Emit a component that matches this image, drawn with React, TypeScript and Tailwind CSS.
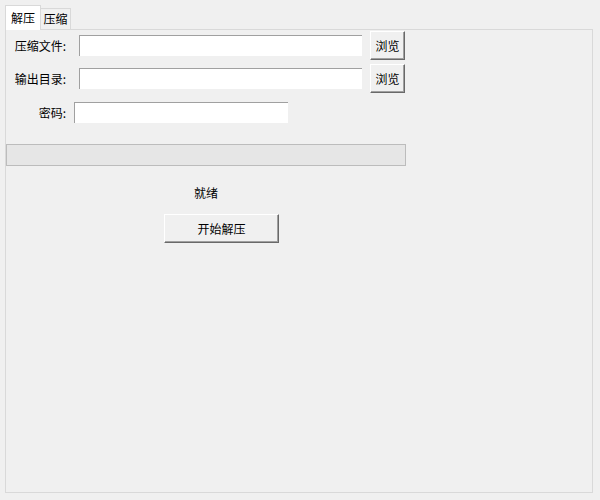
const FONT = "font-['Microsoft_YaHei','Noto_Sans_CJK_SC',sans-serif]";

function Entry({ width }: { width: string }) {
  return (
    <div
      className={`${width} h-[21px] bg-white border-t border-l border-[#a0a0a0] border-r-white border-b-white`}
    />
  );
}

function TkButton({ label, className }: { label: string; className: string }) {
  return (
    <button
      className={`${className} flex items-center justify-center bg-[#f0f0f0] text-[12px] text-black border border-t-white border-l-white border-r-[#696969] border-b-[#696969] shadow-[inset_-1px_-1px_#a0a0a0]`}
    >
      {label}
    </button>
  );
}

export default function App() {
  return (
    <div className={`w-[600px] h-[500px] bg-[#f0f0f0] text-[12px] text-black ${FONT} flex flex-col px-[5px] pt-[5px]`}>
      {/* tabs */}
      <div className="flex items-end h-[24px]">
        <div className="relative z-10 w-[36px] h-[25px] -mb-px bg-white border border-b-0 border-[#d9d9d9] flex items-center justify-center pb-[1px]">
          解压
        </div>
        <div className="w-[30px] h-[21px] bg-[#f0f0f0] border border-l-0 border-b-0 border-[#d9d9d9] flex items-center justify-center">
          压缩
        </div>
      </div>

      {/* panel */}
      <div className="w-[588px] h-[464px] border border-[#d9d9d9] flex flex-col">
        <div className="flex items-center h-[29px] mt-[1px]">
          <span className="w-[60px] text-right">压缩文件:</span>
          <div className="ml-[13px]">
            <Entry width="w-[283px]" />
          </div>
          <TkButton label="浏览" className="ml-[8px] w-[35px] h-[29px]" />
        </div>

        <div className="flex items-center h-[29px] mt-[4px]">
          <span className="w-[60px] text-right">输出目录:</span>
          <div className="ml-[13px]">
            <Entry width="w-[283px]" />
          </div>
          <TkButton label="浏览" className="ml-[8px] w-[35px] h-[29px]" />
        </div>

        <div className="flex items-center h-[21px] mt-[9px]">
          <span className="w-[60px] text-right">密码:</span>
          <div className="ml-[8px]">
            <Entry width="w-[214px]" />
          </div>
        </div>

        <div className="mt-[21px] w-[400px] h-[22px] bg-[#e6e6e6] border border-[#bcbcbc]" />

        <div className="w-[400px] mt-[19px] h-[16px] leading-[16px] text-center">就绪</div>

        <TkButton label="开始解压" className="mt-[13px] ml-[158px] w-[115px] h-[29px]" />
      </div>
    </div>
  );
}
